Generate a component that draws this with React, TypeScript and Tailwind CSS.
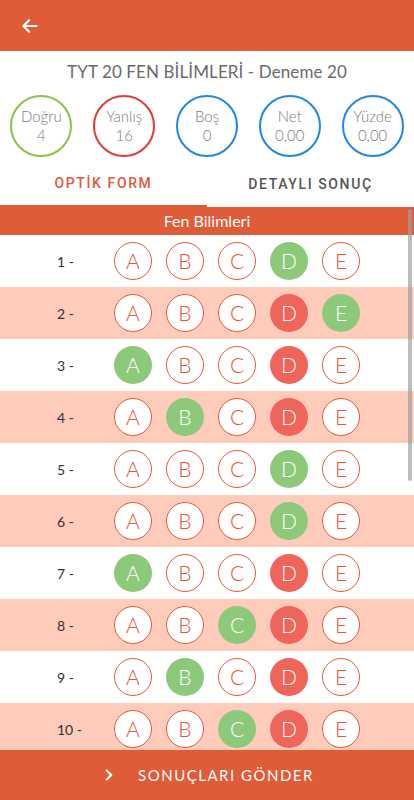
import { ChevronRight } from "lucide-react";

type Mark = "none" | "right" | "wrong";

const OPTIONS = ["A", "B", "C", "D", "E"];

// answers: which option is correct, which one the user picked
const QUESTIONS: { correct: number; picked: number }[] = [
  { correct: 3, picked: 3 },
  { correct: 4, picked: 3 },
  { correct: 0, picked: 3 },
  { correct: 1, picked: 3 },
  { correct: 3, picked: 3 },
  { correct: 3, picked: 3 },
  { correct: 0, picked: 3 },
  { correct: 2, picked: 3 },
  { correct: 1, picked: 3 },
  { correct: 2, picked: 3 },
];

const STATS = [
  { label: "Doğru", value: "4", ring: "border-[#8bc34a]" },
  { label: "Yanlış", value: "16", ring: "border-[#e53935]" },
  { label: "Boş", value: "0", ring: "border-[#1e88e5]" },
  { label: "Net", value: "0,00", ring: "border-[#1e88e5]" },
  { label: "Yüzde", value: "0,00", ring: "border-[#1e88e5]" },
];

function markFor(q: { correct: number; picked: number }, i: number): Mark {
  if (i === q.correct) return "right";
  if (i === q.picked) return "wrong";
  return "none";
}

function Bubble({ letter, mark }: { letter: string; mark: Mark }) {
  const cls =
    mark === "right"
      ? "bg-[#8cc97a] text-white"
      : mark === "wrong"
      ? "bg-[#f0655a] text-white"
      : "bg-white border-[1.5px] border-[#e05a36] text-[#e05a36]";
  return (
    <div className={`w-[38px] h-[38px] rounded-full flex items-center justify-center text-[21px] font-light ${cls}`}>
      {letter}
    </div>
  );
}

export default function App() {
  return (
    <div
      className="flex flex-col h-[800px] w-[414px] bg-white overflow-hidden"
      style={{ fontFamily: "Lato, 'Open Sans', sans-serif" }}
    >
      {/* Header */}
      <div className="h-[51px] bg-[#e05b37] flex items-center px-[20px] shrink-0">
        <svg className="w-[20px] h-[20px]" viewBox="0 0 24 24" fill="none" stroke="white" strokeWidth={2.6} strokeLinecap="round" strokeLinejoin="round">
          <path d="M20 12H4M11 5l-7 7 7 7" />
        </svg>
      </div>

      {/* Title */}
      <div className="mt-[9px] h-[24px] text-center text-[17px] leading-[24px] text-[#6a6a6a] tracking-[0.1px] shrink-0">
        TYT 20 FEN BİLİMLERİ - Deneme 20
      </div>

      {/* Stats */}
      <div className="mt-[11px] grid grid-cols-5 shrink-0">
        {STATS.map((s) => (
          <div key={s.label} className="flex justify-center">
            <div className={`w-[62px] h-[62px] rounded-full border-[2.5px] ${s.ring} flex flex-col items-center justify-center text-[#7a7a7a] text-[15px] leading-[19px] font-light`}>
              <span>{s.label}</span>
              <span>{s.value}</span>
            </div>
          </div>
        ))}
      </div>

      {/* Tabs */}
      <div className="grid grid-cols-2 h-[50px] shrink-0" style={{ fontFamily: "Roboto, sans-serif" }}>
        <div className="flex flex-col">
          <div className="flex-1 flex items-center justify-center pt-[5px] text-[14px] font-medium tracking-[1.6px] text-[#e05a36]">
            OPTİK FORM
          </div>
          <div className="h-[2px] bg-[#e05a36]" />
        </div>
        <div className="flex flex-col">
          <div className="flex-1 flex items-center justify-center pt-[5px] text-[14px] font-medium tracking-[1.6px] text-[#555]">
            DETAYLI SONUÇ
          </div>
        </div>
      </div>

      {/* List */}
      <div className="relative flex-1 overflow-hidden">
        <div className="h-[28px] bg-[#e05b37] text-white text-[16px] flex items-center justify-center">
          Fen Bilimleri
        </div>
        {QUESTIONS.map((q, n) => (
          <div
            key={n}
            className={`h-[52px] flex items-center ${n % 2 === 1 ? "bg-[#ffccbc]" : "bg-white"}`}
          >
            <div className="w-[114px] pl-[57px] text-[14px] text-[#333]">{n + 1} -</div>
            <div className="flex gap-[14px]">
              {OPTIONS.map((o, i) => (
                <Bubble key={o} letter={o} mark={markFor(q, i)} />
              ))}
            </div>
          </div>
        ))}
        {/* scrollbar */}
        <div className="absolute right-[2px] top-[2px] w-[4px] h-[272px] bg-[#9e9e9e]/70 rounded-sm" />
      </div>

      {/* Bottom bar */}
      <div className="h-[50px] bg-[#e05b37] flex items-center justify-center gap-[20px] text-white shrink-0">
        <ChevronRight className="w-[18px] h-[18px]" strokeWidth={3} />
        <span className="text-[15px] tracking-[1.5px]">SONUÇLARI GÖNDER</span>
      </div>
    </div>
  );
}
